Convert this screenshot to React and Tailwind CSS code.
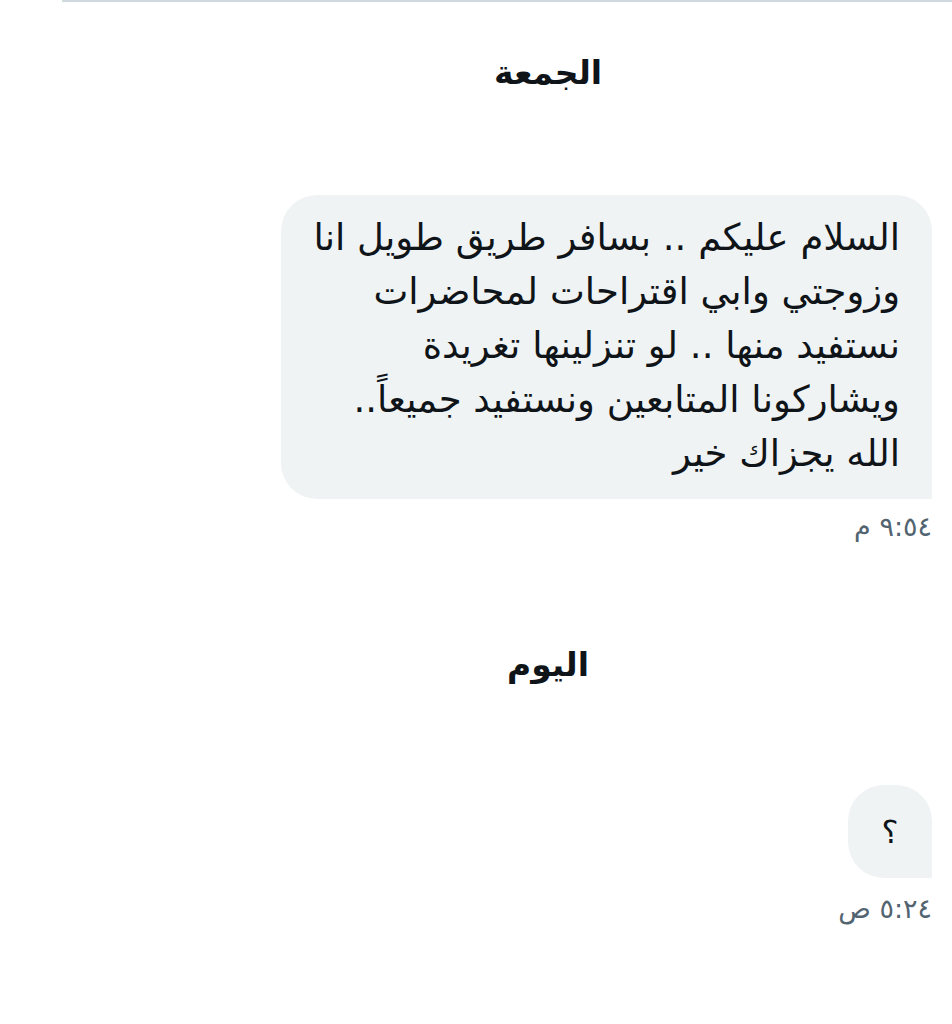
const lines = [
  'السلام عليكم .. بسافر طريق طويل انا',
  'وزوجتي وابي اقتراحات لمحاضرات',
  'نستفيد منها .. لو تنزلينها تغريدة',
  'ويشاركونا المتابعين ونستفيد جميعاً..',
  'الله يجزاك خير',
]

const DayLabel = ({ children }) => (
  <div className="flex justify-center pl-[144px]">
    <h2 className="text-[33px] font-bold text-[#0f1419] leading-none">{children}</h2>
  </div>
)

const App = () => {
  return (
    <div dir="rtl" className="bg-white w-[952px] h-[1024px] overflow-hidden" style={{ fontFamily: '"DejaVu Sans", "Noto Sans", sans-serif' }}>
      <div className="ml-[62px] border-t-2 border-[#cfd9de]" />

      <div className="pt-[54px]">
        <DayLabel>الجمعة</DayLabel>
      </div>

      {/* first message */}
      <div className="flex flex-col items-start pr-[20px] mt-[106px]">
        <div className="w-[651px] bg-[#eff3f4] rounded-[36px] rounded-br-none pr-[32px] pl-[20px] pt-[16px] pb-[18px]">
          {lines.map((line, i) => (
            <p key={i} className="text-[37px] leading-[54px] text-[#0f1419] whitespace-nowrap">{line}</p>
          ))}
        </div>
        <p className="mt-[13px] text-[27px] leading-[30px] text-[#536471]">٩:٥٤ م</p>
      </div>

      <div className="mt-[106px]">
        <DayLabel>اليوم</DayLabel>
      </div>

      {/* second message */}
      <div className="flex flex-col items-start pr-[20px] mt-[104px]">
        <div className="w-[84px] h-[93px] bg-[#eff3f4] rounded-[36px] rounded-br-none flex items-center justify-center">
          <span className="text-[32px] text-[#0f1419]">؟</span>
        </div>
        <p className="mt-[16px] text-[27px] leading-[30px] text-[#536471]">٥:٢٤ ص</p>
      </div>
    </div>
  )
}

export default App
